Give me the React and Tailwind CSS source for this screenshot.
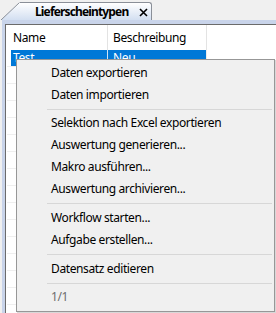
import React from "react";

const items = [
  { t: "Daten exportieren" },
  { t: "Daten importieren", sep: "h-[6px]" },
  { t: "Selektion nach Excel exportieren" },
  { t: "Auswertung generieren..." },
  { t: "Makro ausführen..." },
  { t: "Auswertung archivieren...", sep: "h-[7px]" },
  { t: "Workflow starten..." },
  { t: "Aufgabe erstellen...", sep: "h-[7px]" },
  { t: "Datensatz editieren", sep: "h-[6px]" },
  { t: "1/1", disabled: true },
];

function Row({ selected, a, b }) {
  return (
    <div className="flex h-[17px] border-b border-[#efefef]">
      <div className="w-[4px]" />
      <div
        className={`w-[97px] border-r pl-[2px] leading-[16px] overflow-hidden ${
          selected ? "bg-[#0078d7] border-[#cfe3f5] text-white" : "border-[#ececec]"
        }`}
      >
        {a}
      </div>
      <div
        className={`w-[99px] border-r pl-[5px] leading-[16px] overflow-hidden ${
          selected ? "bg-[#0078d7] border-[#ececec] text-white" : "border-[#ececec]"
        }`}
      >
        {b}
      </div>
    </div>
  );
}

export default function App() {
  return (
    <div className="relative w-[276px] h-[313px] overflow-hidden bg-[#f0f0f0] font-['Noto_Sans',sans-serif] text-[12px] tracking-[-0.38px] text-black flex flex-col">
      {/* tab strip */}
      <div className="flex items-end h-[20px] pl-[1px] shrink-0">
        <svg width="19" height="18" viewBox="0 0 19 18" className="block shrink-0">
          <defs>
            <linearGradient id="tg" x1="0" y1="0" x2="0" y2="1">
              <stop offset="0" stopColor="#ffffff" />
              <stop offset="1" stopColor="#d3dff1" />
            </linearGradient>
          </defs>
          <polygon points="0,18 18.5,0 19,0 19,18" fill="url(#tg)" />
          <line x1="0" y1="18" x2="18.5" y2="0.5" stroke="#8a8f98" strokeWidth="1" />
        </svg>
        <div className="w-[132px] shrink-0 h-[18px] border-t border-r border-[#8a8f98] rounded-tr-[3px] bg-gradient-to-b from-white to-[#d3dff1] flex items-center pl-[15px]">
          <span className="font-bold leading-[17px] tracking-[-0.85px] whitespace-nowrap">Lieferscheintypen</span>
          <svg width="9" height="9" viewBox="0 0 9 9" className="ml-[11px] mt-[1px] shrink-0">
            <path d="M1 1 L8 8 M8 1 L1 8" stroke="#000" strokeWidth="1.6" />
          </svg>
        </div>
      </div>
      {/* frame */}
      <div className="flex-1 ml-[2px] bg-[#c9d4ea] pt-[4px] pl-[3px] flex flex-col">
        <div className="flex-1 bg-white border-l border-t border-[#6b6b6b] pl-[1px] flex flex-col">
          <div className="flex h-[25px] leading-[25px]">
            <div className="w-[4px]" />
            <div className="w-[97px] border-r border-[#e3e3e3] pl-[2px]">Name</div>
            <div className="w-[99px] border-r border-[#e3e3e3] pl-[5px]">Beschreibung</div>
          </div>
          <Row selected a="Test" b="Neu" />
          {Array.from({ length: 16 }).map((_, i) => (
            <Row key={i} a="" b="" />
          ))}
        </div>
      </div>

      {/* context menu */}
      <div className="absolute left-[16px] top-[59px] w-[259px] h-[253px] bg-[#f0f0f0] border border-[#979797] pt-[2px] pb-[3px] shadow-[1px_1px_0_0_#d8d8d8] flex flex-col">
        {items.map((it, i) => (
          <React.Fragment key={i}>
            <div
              className={`h-[22px] leading-[22px] pl-[34px] whitespace-nowrap ${
                it.disabled ? "text-[#6d6d6d]" : "text-black"
              }`}
            >
              {it.t}
            </div>
            {it.sep && (
              <div className={`${it.sep} flex items-center pl-[30px] pr-[2px]`}>
                <div className="h-px w-full bg-[#d7d7d7]" />
              </div>
            )}
          </React.Fragment>
        ))}
      </div>
    </div>
  );
}
